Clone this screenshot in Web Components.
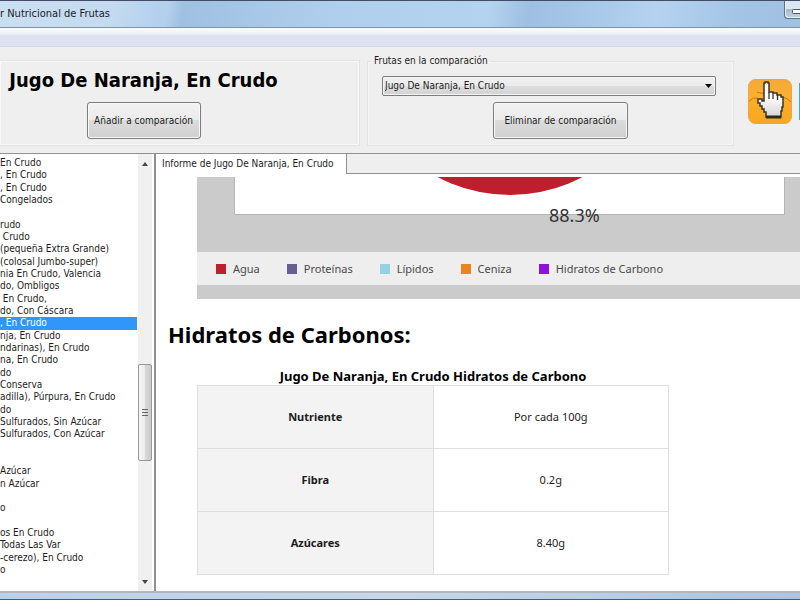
<!DOCTYPE html>
<html lang="es">
<head>
<meta charset="utf-8">
<title>Comparador Nutricional de Frutas</title>
<style>
html, body { height: 100%; margin: 0; }
body { overflow: hidden; font: 10px/12px "DejaVu Sans Condensed", "DejaVu Sans", sans-serif; color: #1c1c1c; }
</style>
</head>
<body>
<fruit-window></fruit-window>
<script>
function define(name, markup, setup) {
  const template = document.createElement('template');
  template.innerHTML = markup;
  customElements.define(name, class extends HTMLElement {
    connectedCallback() {
      if (this.shadowRoot) return;
      this.attachShadow({ mode: 'open' }).append(template.content.cloneNode(true));
      if (setup) setup(this, this.shadowRoot);
    }
  });
}

define('title-bar', `
<style>
:host { display: flex; justify-content: space-between; align-items: flex-start; box-sizing: border-box; height: 28px; overflow: hidden;
  border-top: 1px solid #454a66; border-bottom: 1px solid #7d93ab;
  background: linear-gradient(100deg, #cbdff2 0, #c4daf0 14%, #b3d1ed 20%, #b3d1ed 21%, #9fc0e1 23%, #b0cfec 42%, #b4d3ee 61%, #9dbfe1 66%, #a6c7e7 73%, #b5d3ef 82%, #a3c4e4 92%, #9fc1e2 100%); }
h1 { margin: 0; padding: 6px 10px 0 0; font-size: 11px; line-height: 14px; font-weight: normal; color: #17202b; white-space: pre; }
button { width: 16px; height: 18px; padding: 0; border: 1px solid #5c6f85; border-top: 0; border-right: 0; border-radius: 0 0 0 4px; background: linear-gradient(#dce6f0 0 45%, #a9b9cc 50%, #c4d3e2); box-shadow: inset 1px -1px #e9f1f8; overflow: hidden; }
svg { display: block; margin: 4px 0 0 7px; }
</style>
<h1>r Nutricional de Frutas</h1>
<button aria-label="Minimizar"><svg width="12" height="5"><rect x=".5" y=".5" width="11" height="4" rx="1" fill="#fff" stroke="#4c5967"/></svg></button>`);

define('push-button', `
<style>
:host { display: block; }
button { box-sizing: border-box; height: 37px; padding: 0; width: 100%; border: 1px solid #7d7d7d; border-radius: 3px; box-shadow: inset 0 0 0 1px #f8f8f8; background: linear-gradient(#f2f2f2, #ebebeb 49%, #dcdcdc 50%, #cfcfcf); font: inherit; color: inherit; white-space: nowrap; }
</style>
<button><slot></slot></button>`);

define('current-fruit', `
<style>
:host { display: flex; flex-direction: column; align-items: center; box-sizing: border-box; border: 1px solid #e2e5e4; box-shadow: inset 0 0 0 1px #f7f8f8; border-left: 0; padding: 5px 0 0; }
h2 { margin: 0; font-size: 20px; line-height: 28px; font-weight: bold; color: #000; white-space: nowrap; }
.stack { display: flex; flex-direction: column; align-items: center; gap: 8px; margin-right: 72px; }
push-button { width: 114px; }
</style>
<div class="stack"><h2>Jugo De Naranja, En Crudo</h2>
<push-button>Añadir a comparación</push-button></div>`);

define('compare-group', `
<style>
:host { display: block; }
fieldset { box-sizing: border-box; height: 100%; min-width: 0; margin: 0; border: 1px solid #e2e5e4; box-shadow: inset 0 0 0 1px #f4f5f5; padding: 9px 17px 0 14px; display: flex; flex-direction: column; gap: 6px; }
legend { padding: 0 2px; margin-left: -10px; }
.box { position: relative; display: block; }
select { appearance: none; display: block; width: 100%; height: 20px; box-sizing: border-box; padding: 0 2px; border: 1px solid #7d7d7d; border-radius: 2px; box-shadow: inset 0 0 0 1px #f6f6f6; background: linear-gradient(#f1f1f1, #ebebeb 49%, #dedede 50%, #d2d2d2); font: inherit; color: inherit; }
.box svg { position: absolute; right: 4px; top: 8px; pointer-events: none; }
push-button { width: 135px; align-self: flex-end; margin-right: 88px; }
</style>
<fieldset><legend id="l">Frutas en la comparación</legend>
<span class="box"><select aria-labelledby="l"><option>Jugo De Naranja, En Crudo</option></select><svg width="7" height="4"><path d="M0 0h7L3.500 4z" fill="#000"/></svg></span>
<push-button>Eliminar de comparación</push-button>
</fieldset>`);

define('tool-icons', `
<style>
:host { display: flex; gap: 7px; align-items: flex-start; padding-top: 19px; }
button { flex: none; padding: 0; border: 0; background: none; }
svg { display: block; }
</style>
<button aria-label="Seleccionar fruta"><svg width="44" height="45" viewBox="0 0 44 45">
<defs><linearGradient id="o" x2="0" y2="1"><stop stop-color="#f4a93c"/><stop offset=".4" stop-color="#fcb02c"/><stop offset="1" stop-color="#ee971b"/></linearGradient><linearGradient id="h" x2="0" y2="1"><stop offset=".4" stop-color="#fff"/><stop offset="1" stop-color="#d5d5d5"/></linearGradient></defs>
<rect x=".5" y=".5" width="43" height="44" rx="7" fill="url(#o)" stroke="#e9a54a"/>
<path d="M1 22q4-4 9-3l6 2q14-6 20-3 5 1 7 5v15q0 6-6 6H7q-6 0-6-6z" fill="#fcae22" opacity=".7"/>
<path d="M1 22q4-4 9-3M34 18q6 1 9 5M9 13q5 2 9 1" fill="none" stroke="#c97a18"/>
<path d="M17 3h3v1h1v9h4v1h4v2h4v2h2v10h-1v4h-1v6H18v-5h-2v-3h-2v-3h-2v-3h-2v-4h4v2h2V4h1z" fill="url(#h)" stroke="#3b352c" stroke-width="1.500"/>
<path d="M21 13v7M25 14v6M29.500 16v5" stroke="#3b352c" stroke-width="1.300"/><path d="M18 38h15" stroke="#2b2925" stroke-width="3"/></svg></button>
<button aria-label="Otra herramienta"><svg width="44" height="45"><path d="M0 4h44v37H0z" fill="#36add4"/></svg></button>`);

define('fruit-list', `
<style>
:host { display: grid; grid-template-columns: minmax(0, 1fr) 17px; overflow: hidden; min-height: 0; background: #fff; border-right: 2px solid #8e9093; }
ul { display: grid; grid-auto-rows: minmax(0, 1fr); height: calc(100% + 10px); box-sizing: border-box; margin: 0; padding: 3px 0 0; list-style: none; }
li { display: flex; align-items: center; white-space: pre; min-height: 0; }
li[aria-selected] { background: #3096fa; color: #fff; }
.bar { display: grid; grid-template-rows: 210px 97px 1fr; background: #f0f0f0; margin: 0 2px 0 1px; }
.bar > svg { justify-self: center; align-self: start; margin-top: 8px; }
.bar > svg:last-child { align-self: end; margin: 0 0 7px; }
.thumb { border: 1px solid #989898; border-radius: 2px; background: linear-gradient(90deg, #f6f6f6, #ececec 45%, #d8d8d8 55%, #cacaca); display: grid; place-items: center; }
</style>
<ul role="listbox" aria-label="Frutas"></ul>
<div class="bar"><svg width="6" height="4"><path d="M3 0l3 4H0z" fill="#444"/></svg>
<div class="thumb"><svg width="6" height="7"><path d="M0 .5h6M0 3.500h6M0 6.500h6" stroke="#666"/></svg></div>
<svg width="6" height="4"><path d="M0 0h6L3 4z" fill="#444"/></svg></div>`,
(host, root) => {
  const items = ['En Crudo', ', En Crudo', ', En Crudo', 'Congelados', '', 'rudo', ' Crudo', '(pequeña Extra Grande)', '(colosal Jumbo-super)', 'nia En Crudo, Valencia', 'do, Ombligos', ' En Crudo,', 'do, Con Cáscara', ', En Crudo', 'nja, En Crudo', 'ndarinas), En Crudo', 'na, En Crudo', 'do', 'Conserva', 'adilla), Púrpura, En Crudo', 'do', 'Sulfurados, Sin Azúcar', 'Sulfurados, Con Azúcar', '', '', 'Azúcar', 'n Azúcar', '', 'o', '', 'os En Crudo', 'Todas Las Var', '-cerezo), En Crudo', 'o', '', ''];
  const list = root.querySelector('ul');
  items.forEach((text, i) => {
    const li = document.createElement('li');
    li.setAttribute('role', 'option');
    li.textContent = text;
    if (i === 13) li.setAttribute('aria-selected', 'true');
    list.append(li);
  });
});

define('legend-item', `
<style>
:host { display: flex; align-items: center; gap: 7px; white-space: nowrap; }
i { width: 10px; height: 10px; background: var(--swatch); }
</style><i></i><slot></slot>`);

define('composition-chart', `
<style>
:host { display: block; overflow: hidden; background: #cbcbcb; color: #4a4a4a; }
.plot { position: relative; height: 75px; }
.area { height: 37px; margin: 0 15px 0 37px; border: 1px solid #b5b5b5; border-top: 0; background: #fff; overflow: hidden; display: flex; justify-content: center; }
.area svg { display: block; }
output { position: absolute; left: 352px; top: 26px; font-size: 18px; line-height: 24px; color: #333; }
.key { display: flex; align-items: center; gap: 27px; height: 33px; padding-left: 19px; background: #eee; font-size: 11px; line-height: 16px; margin-bottom: 14px; }
</style>
<div class="plot"><div class="area"><svg width="310" height="18" viewBox="0 292 310 18"><circle cx="155" cy="155" r="155" fill="#be1e2d"/></svg></div><output>88.3%</output></div>
<div class="key">
<legend-item style="--swatch:#be1e2d">Agua</legend-item>
<legend-item style="--swatch:#666092">Proteínas</legend-item>
<legend-item style="--swatch:#92d2e4">Lípidos</legend-item>
<legend-item style="--swatch:#e8851f">Ceniza</legend-item>
<legend-item style="--swatch:#8a12dc">Hidratos de Carbono</legend-item>
</div>`);

define('nutrient-table', `
<style>
:host { display: block; }
table { width: 100%; border-collapse: collapse; table-layout: fixed; }
caption { font-size: 13px; line-height: 18px; font-weight: bold; color: #000; white-space: nowrap; }
th, td { box-sizing: border-box; height: 63px; padding: 0; border: 1px solid #dedede; text-align: center; font-size: 11px; line-height: 16px; }
th { background: #f3f3f3; }
</style>
<table><caption>Jugo De Naranja, En Crudo Hidratos de Carbono</caption>
<tbody><tr><th scope="row">Nutriente</th><td>Por cada 100g</td></tr>
<tr><th scope="row">Fibra</th><td>0.2g</td></tr>
<tr><th scope="row">Azúcares</th><td>8.40g</td></tr></tbody></table>`);

define('fruit-report', `
<style>
:host { display: flex; flex-direction: column; min-width: 0; min-height: 0; overflow: hidden; background: #fff; }
nav { display: flex; height: 20px; flex: none; background: #efefef; margin-bottom: 3px; }
nav::after { content: ""; flex: 1; box-sizing: border-box; border-bottom: 1px solid #8e9093; }
button { box-sizing: border-box; padding: 0 7px 0 6px; border: 0; border-right: 1px solid #8e9093; background: #fff; font: inherit; color: inherit; white-space: nowrap; width: 191px; text-align: left; }
article { font-family: "Noto Sans", "Open Sans", sans-serif; }
composition-chart { margin-left: 41px; }
h2 { margin: 20px 0 0 12px; font-size: 22px; line-height: 30px; color: #000; }
nutrient-table { margin: 18px 131px 0 41px; }
</style>
<nav role="tablist"><button role="tab" aria-selected="true">Informe de Jugo De Naranja, En Crudo</button></nav>
<article>
<composition-chart></composition-chart>
<h2>Hidratos de Carbonos:</h2>
<nutrient-table></nutrient-table>
</article>`);

define('fruit-window', `
<style>
:host { display: grid; grid-template-rows: auto 19px 106px minmax(0, 1fr) 9px; height: 100%; overflow: hidden; background: #efefef; }
.menu { box-sizing: border-box; border-bottom: 1px solid #d3d5e2; background: linear-gradient(#fafcfe 0, #eef1f8 30%, #dde1f1 45%, #dfe2f2); }
.tools { display: grid; grid-template-columns: 360px 367px 1fr; column-gap: 7px; overflow: hidden; padding: 13px 0 7px; }
tool-icons { padding-left: 7px; }
compare-group { margin-top: -5px; }
.work { display: grid; grid-template-columns: 156px minmax(0, 1fr); min-height: 0; border-top: 1px solid #8e9093; }
.frame { box-sizing: border-box; border-top: 2px solid #b4b7ba; border-bottom: 1px solid #4a5a6c; background: linear-gradient(90deg, #b9d2ec, #c5d8ec 50%, #a9c5e3); }
</style>
<title-bar></title-bar>
<div class="menu"></div>
<div class="tools"><current-fruit></current-fruit><compare-group></compare-group><tool-icons></tool-icons></div>
<div class="work"><fruit-list></fruit-list><fruit-report></fruit-report></div>
<div class="frame"></div>`);
</script>
</body>
</html>
